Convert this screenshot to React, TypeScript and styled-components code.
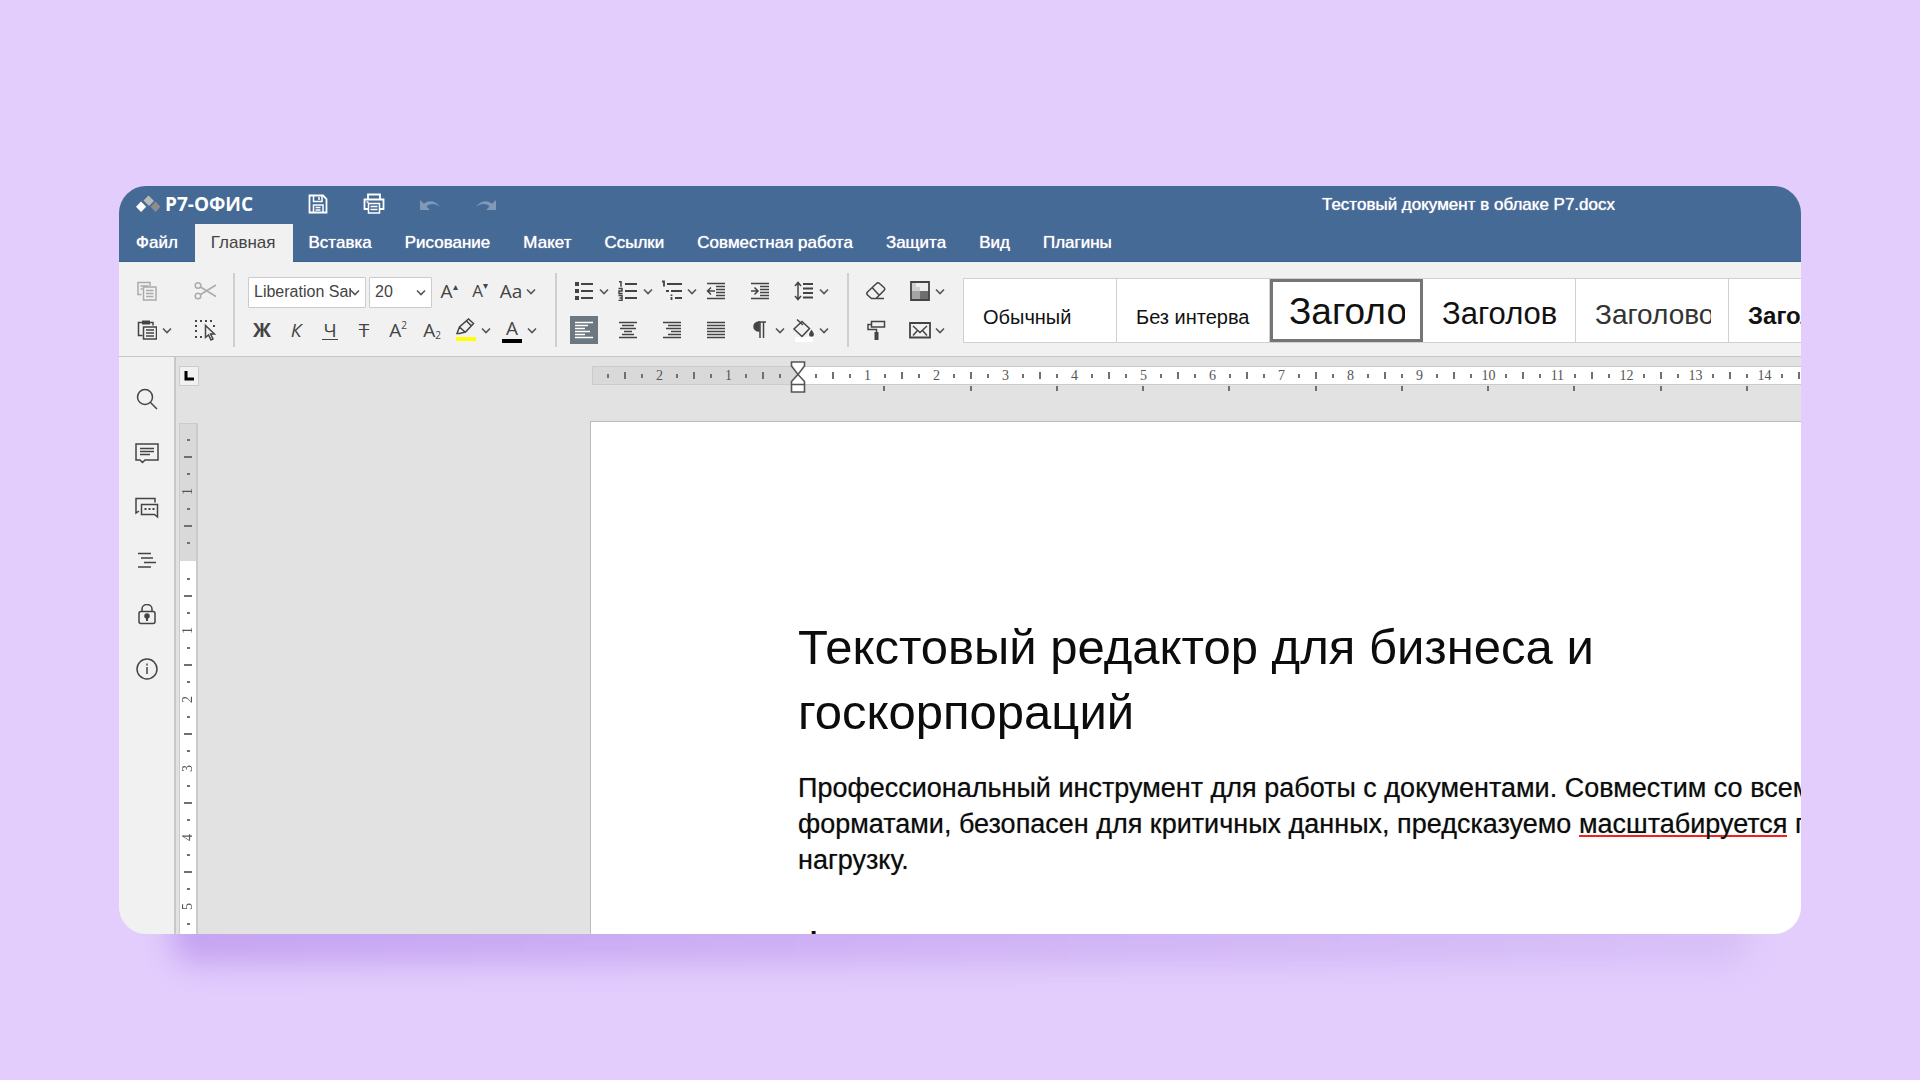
import React from "react";
import styled, { createGlobalStyle, css } from "styled-components";

const sans = '"Liberation Sans", Arial, sans-serif';
const ink = "#444444";

const GlobalStyle = createGlobalStyle`
  *, *::before, *::after { box-sizing: border-box; }
  body { margin: 0; background: #e2cdfd; font-family: ${sans}; }
  button, select { font: inherit; color: inherit; }
  h1, h2, p { margin: 0; font-weight: 400; }
  svg { display: block; flex: none; }
`;

/* ---------- frame ---------- */

const Stage = styled.main`
  height: 100vh;
  padding: 186px 119px 146px;
  display: flex;
  background: #e2cdfd;
  overflow: hidden;
`;

const Frame = styled.div`
  position: relative;
  z-index: 0;
  flex: 1;
  min-width: 0;
  display: flex;
  &::before {
    content: "";
    position: absolute;
    z-index: -1;
    left: 52px;
    right: 52px;
    bottom: -30px;
    height: 80px;
    border-radius: 24px;
    background: linear-gradient(90deg, #c5a3f1, #d8c0f7);
    filter: blur(14px);
  }
`;

const Editor = styled.div`
  flex: 1;
  min-width: 0;
  display: flex;
  flex-direction: column;
  border-radius: 27px;
  overflow: hidden;
  background: #e2e2e2;
`;

/* ---------- header ---------- */

const Header = styled.header`
  flex: none;
  background: #466a96;
  border-bottom: 1px solid #38608f;
  color: #ffffff;
`;

const TitleBar = styled.div`
  height: 38px;
  padding: 0 186px 0 17px;
  display: flex;
  align-items: center;
  justify-content: space-between;
`;

const TitleLeft = styled.div`
  display: flex;
  align-items: center;
  padding-bottom: 2px;
`;

const Brand = styled.a`
  width: 168px;
  display: flex;
  align-items: center;
  gap: 4px;
  color: inherit;
  text-decoration: none;
  font: 700 19px/28px "Open Sans", "Noto Sans", sans-serif;
`;

const QuickActions = styled.div`
  display: flex;
  gap: 28px;
`;

const QuickButton = styled.button`
  width: 28px;
  height: 28px;
  padding: 0;
  border: 0;
  background: none;
  display: grid;
  place-items: center;
  &:disabled { color: #8099b8; }
`;

const FileName = styled.span`
  font-size: 17px;
  line-height: 24px;
  text-shadow: 0 0 1px #ffffff;
`;

const Tabs = styled.nav`
  display: flex;
  height: 37px;
  padding-left: 1px;
`;

const Tab = styled.button<{ $active?: boolean }>`
  padding: 0 17px 0 16px;
  border: 0;
  background: none;
  font-size: 17px;
  line-height: 24px;
  text-shadow: 0 0 1px currentColor;
  white-space: nowrap;
  ${(p) =>
    p.$active &&
    css`
      background: #f1f1f1;
      color: ${ink};
      text-shadow: none;
      height: 38px;
    `}
`;

/* ---------- toolbar ---------- */

const Toolbar = styled.div`
  flex: none;
  height: 95px;
  padding: 14px 0 11px 14px;
  display: flex;
  background: #f1f1f1;
  border-bottom: 1px solid #c6c6c6;
  color: ${ink};
  overflow: hidden;
`;

const Group = styled.div<{ $min: number }>`
  flex: none;
  min-width: ${(p) => p.$min}px;
  display: flex;
  flex-direction: column;
  gap: 9px;
`;

const Row = styled.div<{ $gap?: number }>`
  height: 30px;
  display: flex;
  align-items: center;
  gap: ${(p) => p.$gap ?? 0}px;
`;

const CellGrid = styled.div<{ $cell: number; $count: number }>`
  flex: none;
  display: grid;
  grid-template-columns: repeat(${(p) => p.$count}, ${(p) => p.$cell}px);
  grid-auto-rows: 30px;
  row-gap: 9px;
  align-items: center;
`;

const Separator = styled.div`
  flex: none;
  width: 2px;
  height: 74px;
  margin: -3px 13px 0;
  background: #cfcfcf;
`;

const ToolButton = styled.button<{ $split?: boolean; $active?: boolean }>`
  flex: none;
  width: ${(p) => (p.$split ? 40 : 28)}px;
  height: 28px;
  padding: 0;
  border: 0;
  background: ${(p) => (p.$active ? "#6d7780" : "none")};
  color: ${(p) => (p.$active ? "#ffffff" : "inherit")};
  display: grid;
  grid-template-columns: 28px 12px;
  align-items: center;
  justify-items: center;
  &:disabled { color: #ababab; }
`;

const Glyph = styled.span<{ $bold?: boolean; $italic?: boolean; $size?: number; $bar?: string }>`
  display: block;
  font-family: "Open Sans", "Noto Sans", sans-serif;
  font-size: ${(p) => p.$size ?? 19}px;
  line-height: 20px;
  font-weight: ${(p) => (p.$bold ? 700 : 400)};
  font-style: ${(p) => (p.$italic ? "italic" : "normal")};
  white-space: nowrap;
  sup, sub { font-size: 10px; line-height: 0; }
  sup { vertical-align: 8px; }
  sub { vertical-align: -2px; }
  ${(p) =>
    p.$bar &&
    css`
      width: 20px;
      text-align: center;
      border-bottom: 4px solid ${p.$bar};
      padding-bottom: 1px;
    `}
`;

const Underlined = styled(Glyph)`
  border-bottom: 1px solid currentColor;
  line-height: 18px;
  padding: 0 1px;
`;

const Combo = styled.label<{ $width: number }>`
  position: relative;
  flex: none;
  width: ${(p) => p.$width}px;
  margin-top: 2px;
  svg {
    position: absolute;
    right: 6px;
    top: 12px;
    pointer-events: none;
  }
`;

const Select = styled.select`
  appearance: none;
  width: 100%;
  height: 31px;
  padding: 0 14px 0 5px;
  border: 1px solid #cbcbcb;
  border-radius: 1px;
  background: #ffffff;
  font: 16px/20px ${sans};
  display: block;
`;

const Gallery = styled.div`
  flex: none;
  display: flex;
  height: 65px;
  margin: 2px 0 0 13px;
  border: solid #d0d0d0;
  border-width: 1px 0 1px 1px;
  background: #ffffff;
`;

const StyleCard = styled.button<{ $size: number; $bold?: boolean; $selected?: boolean; $soft?: boolean }>`
  width: 153px;
  padding: 0 17px 0 19px;
  border: 0;
  border-right: 1px solid #d0d0d0;
  background: none;
  color: ${(p) => (p.$soft ? "#333333" : "#111111")};
  font-family: ${sans};
  font-size: ${(p) => p.$size}px;
  font-weight: ${(p) => (p.$bold ? 700 : 400)};
  text-align: left;
  display: flex;
  align-items: baseline;
  outline: ${(p) => (p.$selected ? "3px solid #757575" : "none")};
  outline-offset: -3px;
  &::before {
    content: "";
    height: 45px;
  }
`;

const StyleName = styled.span`
  flex: 1;
  min-width: 0;
  white-space: nowrap;
  overflow: clip;
`;

/* ---------- workspace ---------- */

const Workspace = styled.div`
  flex: 1;
  min-height: 0;
  display: flex;
`;

const Sidebar = styled.aside`
  flex: none;
  width: 57px;
  padding-top: 28px;
  display: flex;
  flex-direction: column;
  align-items: center;
  gap: 26px;
  background: #f1f1f1;
  border-right: 2px solid #c8c8c8;
  color: ${ink};
`;

const SideButton = styled.button`
  width: 28px;
  height: 28px;
  padding: 0;
  border: 0;
  background: none;
  display: grid;
  place-items: center;
`;

const Canvas = styled.div`
  flex: 1;
  min-width: 0;
  display: flex;
  flex-direction: column;
`;

const CanvasTop = styled.div`
  flex: none;
  height: 64px;
  padding: 9px 0 0 3px;
  display: flex;
  align-items: flex-start;
`;

const TabStop = styled.button`
  flex: none;
  width: 20px;
  height: 20px;
  padding: 0;
  border: 1px solid #cbcbcb;
  background: #f1f1f1;
  display: grid;
  place-items: center;
`;

const HRuler = styled.div`
  flex: 1;
  min-width: 0;
  margin-left: 393px;
`;

const HBar = styled.div`
  display: flex;
  height: 19px;
  border: solid #cbcbcb;
  border-width: 1px 0 1px 1px;
`;

const HMargin = styled.div`
  flex: none;
  width: 205px;
  padding-left: 6px;
  display: flex;
  background: #d9d9d9;
  overflow: hidden;
`;

const HText = styled.div`
  position: relative;
  flex: 1;
  min-width: 0;
  background: #ffffff;
`;

const HScale = styled.div`
  height: 100%;
  padding-left: 9px;
  display: flex;
  overflow: hidden;
`;

const HMarks = styled.div`
  flex: none;
  width: 69px;
  display: grid;
  grid-template-columns: repeat(4, 1fr);
  place-items: center;
`;

const TickLine = styled.i<{ $length: number; $vertical?: boolean }>`
  display: block;
  background: #707070;
  width: ${(p) => (p.$vertical ? p.$length : 2)}px;
  height: ${(p) => (p.$vertical ? 2 : p.$length)}px;
`;

const RulerNumber = styled.span<{ $vertical?: boolean }>`
  font: 14px/16px "Liberation Serif", serif;
  color: #555555;
  ${(p) =>
    p.$vertical &&
    css`
      writing-mode: vertical-rl;
      transform: rotate(180deg);
    `}
`;

const IndentMarker = styled.svg`
  position: absolute;
  left: -8px;
  top: -6px;
`;

const DefaultTabs = styled.div`
  display: flex;
  margin-left: 207px;
  padding-top: 1px;
  overflow: hidden;
`;

const DefaultTabGroup = styled.div`
  flex: none;
  width: 345px;
  display: grid;
  grid-template-columns: repeat(4, 1fr);
  justify-items: end;
`;

const CanvasBody = styled.div`
  flex: 1;
  min-height: 0;
  display: flex;
`;

const VRuler = styled.div`
  flex: none;
  width: 19px;
  margin: 2px 0 0 3px;
  border: solid #cbcbcb;
  border-width: 1px 2px 0 1px;
  overflow: hidden;
`;

const VPart = styled.div<{ $shade: string; $height?: number; $pad: number }>`
  height: ${(p) => (p.$height ? `${p.$height}px` : "auto")};
  padding-top: ${(p) => p.$pad}px;
  background: ${(p) => p.$shade};
  overflow: hidden;
`;

const VMarks = styled.div`
  height: 69px;
  display: grid;
  grid-template-rows: repeat(4, 1fr);
  place-items: center;
  > * { min-height: 0; }
`;

const Page = styled.article`
  flex: none;
  width: 1450px;
  margin-left: 392px;
  padding: 193px 104px 0 207px;
  background: #ffffff;
  border: solid #b9bac3;
  border-width: 1px 1px 0;
  color: #0c0c0c;
  white-space: nowrap;
  overflow: hidden;
`;

const Heading = styled.h1`
  font-size: 49px;
  line-height: 65px;
`;

const Paragraph = styled.p`
  margin-top: 25px;
  font-size: 27px;
  line-height: 36px;
  text-shadow: 0 0 1px #8a8a8a;
`;

const Misspelled = styled.span`
  display: inline-block;
  height: 31px;
  border-bottom: 2px solid #f3211b;
  vertical-align: top;
`;

const SubHeading = styled.h2`
  margin-top: 44px;
  font-size: 41px;
  line-height: 46px;
`;

/* ---------- icons ---------- */

type IconProps = { size?: number; children: React.ReactNode };
const Icon = ({ size = 20, children }: IconProps) => (
  <svg
    width={size}
    height={size}
    viewBox={`0 0 ${size} ${size}`}
    fill="none"
    stroke="currentColor"
    strokeWidth="1.5"
    aria-hidden="true"
  >
    {children}
  </svg>
);

const Chevron = () => (
  <svg width="10" height="7" viewBox="0 0 10 7" fill="none" stroke="#555555" strokeWidth="1.6" aria-hidden="true">
    <path d="M1 1.500l4 4 4-4" />
  </svg>
);

const lines = (rows: [number, number, number][]) => rows.map(([x, y, w]) => `M${x} ${y}h${w}`).join("");

const Logo = () => (
  <svg width="25" height="18" viewBox="0 0 25 18" aria-hidden="true">
    <path d="M12.500 0.500l5.500 5.500-5 5-5.500-5.500z" fill="#b9b9b9" />
    <path d="M5 6.500l5.200 5.200-5.200 5.200-5-5.200z" fill="#ffffff" />
    <path d="M19.500 6.500l4.900 5.200-4.900 5.200-4.900-5.200z" fill="#8f8d8c" />
  </svg>
);

const SaveIcon = () => (
  <Icon>
    <path d="M1.500 1.500h13.500l3.500 3.500v13.500h-17z" strokeWidth="1.800" />
    <path d="M5.500 2v5.500h8.500v-5.500M11 3v3M5.500 18v-7h9.500v7M7.500 13.500h5M7.500 16h5" />
  </Icon>
);

const PrintIcon = () => (
  <Icon size={24}>
    <path d="M6 7v-4.500h12v4.500M6 17h-3.500v-9.500h19v9.500h-3.500" strokeWidth="1.800" />
    <path d="M6.500 11.500h11v9.500h-11zM8.500 14.500h7M8.500 17.500h7M4.500 10h2" />
  </Icon>
);

const UndoIcon = ({ flip }: { flip?: boolean }) => (
  <Icon size={22}>
    <g transform={flip ? "matrix(-1 0 0 1 22 0)" : undefined} stroke="none" fill="currentColor">
      <path d="M1 7v10h10l-3.500-3.500c4-3.500 9-3 13.500.5-4-6.500-11.500-7.500-16-3.300z" />
    </g>
  </Icon>
);

const CopyIcon = () => (
  <Icon>
    <path d="M4.500 13.500h-3.500v-12h12v3.500M3.500 5h8M3.500 8h2M6.500 6h12.500v13h-12.500zM9 9.500h7.500M9 12.500h7.500M9 15.500h7.500" />
  </Icon>
);

const CutIcon = () => (
  <Icon size={22}>
    <circle cx="4" cy="5.500" r="2.800" />
    <circle cx="4" cy="16" r="2.800" />
    <path d="M6.500 7l15.500 9.500M6.500 14.500l15.500-9.500" />
  </Icon>
);

const PasteIcon = () => (
  <Icon>
    <path d="M5 2.500h-3.500v13h4M13 2.500h3v3" />
    <path d="M5 0.500h8v4h-8z" fill="currentColor" stroke="none" />
    <path d="M6.500 7h13v12h-13zM9 10h8M9 13h8M9 16h8" />
  </Icon>
);

const SelectAllIcon = () => (
  <Icon size={22}>
    <path d="M1 2h20M1 18h9" strokeDasharray="2 3" strokeWidth="2" />
    <path d="M2 6v10M20 6v4" strokeDasharray="2 3" strokeWidth="2" />
    <path d="M11.500 6.500v12l3-2.500 2.500 5 2-1-2.500-5h4z" fill="#f1f1f1" />
  </Icon>
);

const HighlightIcon = () => (
  <Icon size={24}>
    <path d="M3 15.500l2.500-6.500 9-8 5 4.500-8 8.500-6 1.500zM5.500 9l5.500 5M12.500 3l4.500 4.500" />
    <path d="M2 19h20v4h-20z" fill="#ffff00" stroke="none" />
  </Icon>
);

const BulletsIcon = () => (
  <Icon>
    <path d={lines([[7, 3, 12], [7, 10, 12], [7, 17, 12]])} strokeWidth="1.800" />
    <path d="M1 1h4v4h-4zM1 8h4v4h-4zM1 15h4v4h-4z" fill="currentColor" stroke="none" />
  </Icon>
);

const NumbersIcon = () => (
  <Icon>
    <path d={lines([[7, 3, 12], [7, 10, 12], [7, 17, 12]])} strokeWidth="1.800" />
    <path d="M1 0.700h2v5M0.500 7.500h3.500v2.500h-3v2.500h3.500M0.500 14.500h3.500v5h-3.500M1.500 17h2.500" strokeWidth="1.500" />
  </Icon>
);

const MultiLevelIcon = () => (
  <Icon size={22}>
    <path d={lines([[6, 4, 15], [10, 11, 11], [14, 18, 7]])} strokeWidth="1.800" />
    <path d="M1 1.500h2v5M5 11h3M10.500 14.500v1.500M10.500 17v3" strokeWidth="1.800" />
  </Icon>
);

const OutdentIcon = ({ flip }: { flip?: boolean }) => (
  <Icon>
    <path
      d={lines([[1, 2.500, 18], [10, 5.500, 9], [10, 8.500, 9], [10, 11.500, 9], [10, 14.500, 9], [1, 17.500, 18]])}
      strokeWidth="1.500"
    />
    <path d={flip ? "M1 10h7M4.500 6.500l3.500 3.500-3.500 3.500" : "M2 10h7M5 6.500l-3.500 3.500 3.500 3.500"} />
  </Icon>
);

const LineSpacingIcon = () => (
  <Icon>
    <path d={lines([[9, 3, 10], [9, 7.500, 10], [9, 12, 10], [9, 16.500, 10]])} strokeWidth="1.800" />
    <path d="M4 2v16M1 5l3-3.500 3 3.500M1 15l3 3.500 3-3.500" />
  </Icon>
);

const alignRows: Record<string, [number, number, number][]> = {
  left: [[1, 2.500, 18], [1, 5.500, 13], [1, 8.500, 10], [1, 11.500, 15], [1, 14.500, 10], [1, 17.500, 18]],
  center: [[1, 2.500, 18], [4, 5.500, 12], [2, 8.500, 16], [6, 11.500, 8], [4, 14.500, 12], [1, 17.500, 18]],
  right: [[1, 2.500, 18], [6, 5.500, 13], [4, 8.500, 15], [9, 11.500, 10], [6, 14.500, 13], [1, 17.500, 18]],
  justify: [[1, 2.500, 18], [1, 5.500, 18], [1, 8.500, 18], [1, 11.500, 18], [1, 14.500, 18], [1, 17.500, 18]],
};

const AlignIcon = ({ kind }: { kind: string }) => (
  <Icon>
    <path d={lines(alignRows[kind])} strokeWidth="1.600" />
  </Icon>
);

const PilcrowIcon = () => (
  <Icon>
    <path d="M9 2a5 4.500 0 0 0 0 9z" fill="currentColor" />
    <path d="M8 2h8M10 2v16M13.500 2v16" />
  </Icon>
);

const FillIcon = () => (
  <Icon size={24}>
    <path d="M3 19h18v5h-18z" fill="#ffffff" stroke="none" />
    <path d="M10 3.500l7.500 7-7.500 8-8-7.500zM5 1.500l6 5.500" />
    <path d="M19.500 13c2.500 3.500 2 5 0 5s-2.500-1.500 0-5z" fill="currentColor" />
  </Icon>
);

const EraserIcon = () => (
  <Icon size={22}>
    <path d="M2.500 12l9-8.500q1.500-1.500 3 0l4.500 4q1.500 1.500 0 3l-8 8h-4.500l-4-3.500q-1.500-1.500 0-3zM7.500 8l6.500 7M10 18.500h9" />
  </Icon>
);

const PainterIcon = () => (
  <Icon>
    <path d="M5.500 1.500h13v5.500h-13zM5.500 4.500h-3.500v5h8.500v2.500" />
    <path d="M8.500 12h4v8h-4z" fill="currentColor" stroke="none" />
  </Icon>
);

const PaletteIcon = () => (
  <Icon>
    <path d="M1 1h9v9h-9z" fill="#cfcfcf" stroke="none" />
    <path d="M6 1h5v5h-5zM11 1h8v9h-8z" fill="#ececec" stroke="none" />
    <path d="M1 10h9v9h-9z" fill="#a4a4a4" stroke="none" />
    <path d="M10 10h9v9h-9z" fill="#6f6f6f" stroke="none" />
    <path d="M1 1h18v18h-18z" strokeWidth="1.800" />
  </Icon>
);

const MailIcon = () => (
  <Icon size={22}>
    <path d="M1 4h20v14.500h-20z" strokeWidth="1.800" />
    <path d="M4 7l7 6.500 7-6.500M4 16.500l4.500-5M18 16.500l-4.500-5" />
  </Icon>
);

const SearchIcon = () => (
  <Icon size={22}>
    <circle cx="9" cy="9" r="7.500" />
    <path d="M14.500 14.500l6.500 6.500" />
  </Icon>
);

const CommentIcon = () => (
  <Icon size={24}>
    <path d="M1 3h22v16h-13l-2.500 2.500-2.500-2.500h-4zM5 7.500h14M5 10.500h14M5 13.500h10" />
  </Icon>
);

const ChatIcon = () => (
  <Icon size={24}>
    <path d="M4 16l-3 2v-14.500h19v4M6.500 9.500h16v12.500l-3-2.500h-13z" />
    <path d="M9.500 14h2M13.500 14h2M17.500 14h2" strokeWidth="2" />
  </Icon>
);

const NavIcon = () => (
  <Icon>
    <path d={lines([[1, 2.500, 13], [4, 7, 12], [7, 11.500, 12], [1, 16, 13]])} />
  </Icon>
);

const LockIcon = () => (
  <Icon size={22}>
    <rect x="3" y="7.500" width="16" height="12" rx="2" />
    <path d="M6 7v-2a5 4.500 0 0 1 10 0v2" />
    <circle cx="11" cy="12" r="2" fill="currentColor" />
    <path d="M11 12v5" strokeWidth="2" />
  </Icon>
);

const InfoIcon = () => (
  <Icon size={22}>
    <circle cx="11" cy="11" r="10" />
    <path d="M11 9v7M11 5.500v2" />
  </Icon>
);

/* ---------- data ---------- */

const tabNames = ["Файл", "Главная", "Вставка", "Рисование", "Макет", "Ссылки", "Совместная работа", "Защита", "Вид", "Плагины"];

const sideTools: [string, React.ReactNode][] = [
  ["Поиск", <SearchIcon />],
  ["Комментарии", <CommentIcon />],
  ["Чат", <ChatIcon />],
  ["Навигация", <NavIcon />],
  ["Защита", <LockIcon />],
  ["О программе", <InfoIcon />],
];

const paragraphTools: { label: string; icon: React.ReactNode; split?: boolean; active?: boolean }[] = [
  { label: "Маркеры", icon: <BulletsIcon />, split: true },
  { label: "Нумерация", icon: <NumbersIcon />, split: true },
  { label: "Многоуровневый список", icon: <MultiLevelIcon />, split: true },
  { label: "Уменьшить отступ", icon: <OutdentIcon /> },
  { label: "Увеличить отступ", icon: <OutdentIcon flip /> },
  { label: "Междустрочный интервал", icon: <LineSpacingIcon />, split: true },
  { label: "По левому краю", icon: <AlignIcon kind="left" />, active: true },
  { label: "По центру", icon: <AlignIcon kind="center" /> },
  { label: "По правому краю", icon: <AlignIcon kind="right" /> },
  { label: "По ширине", icon: <AlignIcon kind="justify" /> },
  { label: "Непечатаемые символы", icon: <PilcrowIcon />, split: true },
  { label: "Заливка", icon: <FillIcon />, split: true },
];

const cardStyles: { name: string; size: number; bold?: boolean; selected?: boolean; soft?: boolean }[] = [
  { name: "Обычный", size: 20 },
  { name: "Без интерва", size: 20 },
  { name: "Заголо", size: 37, selected: true },
  { name: "Заголов", size: 31 },
  { name: "Заголово", size: 28, soft: true },
  { name: "Заголо", size: 24, bold: true },
];

/* ---------- parts ---------- */

type ToolProps = { label: string; split?: boolean; active?: boolean; disabled?: boolean; children: React.ReactNode };
const Tool = ({ label, split, active, disabled, children }: ToolProps) => (
  <ToolButton type="button" aria-label={label} disabled={disabled} $split={split} $active={active}>
    {children}
    {split && <Chevron />}
  </ToolButton>
);

const Marks = ({ value, vertical }: { value?: number; vertical?: boolean }) => {
  const Box = vertical ? VMarks : HMarks;
  return (
    <Box>
      <TickLine $length={vertical ? 3 : 4} $vertical={vertical} />
      <TickLine $length={vertical ? 8 : 7} $vertical={vertical} />
      <TickLine $length={vertical ? 3 : 4} $vertical={vertical} />
      {value ? <RulerNumber $vertical={vertical}>{value}</RulerNumber> : <span />}
    </Box>
  );
};

const range = (n: number) => Array.from({ length: n }, (_, i) => i + 1);

export default function App() {
  return (
    <Stage>
      <GlobalStyle />
      <Frame>
        <Editor>
          <Header>
            <TitleBar>
              <TitleLeft>
                <Brand href="#">
                  <Logo />
                  Р7-ОФИС
                </Brand>
                <QuickActions>
                  <QuickButton type="button" aria-label="Сохранить"><SaveIcon /></QuickButton>
                  <QuickButton type="button" aria-label="Печать"><PrintIcon /></QuickButton>
                  <QuickButton type="button" aria-label="Отменить" disabled><UndoIcon /></QuickButton>
                  <QuickButton type="button" aria-label="Повторить" disabled><UndoIcon flip /></QuickButton>
                </QuickActions>
              </TitleLeft>
              <FileName>Тестовый документ в облаке Р7.docx</FileName>
            </TitleBar>
            <Tabs>
              {tabNames.map((name) => (
                <Tab key={name} type="button" $active={name === "Главная"}>{name}</Tab>
              ))}
            </Tabs>
          </Header>

          <Toolbar>
            <Group $min={87}>
              <Row $gap={30}>
                <Tool label="Копировать" disabled><CopyIcon /></Tool>
                <Tool label="Вырезать" disabled><CutIcon /></Tool>
              </Row>
              <Row $gap={18}>
                <Tool label="Вставить" split><PasteIcon /></Tool>
                <Tool label="Выделить всё"><SelectAllIcon /></Tool>
              </Row>
            </Group>
            <Separator />
            <Group $min={294}>
              <Row $gap={3}>
                <Combo $width={118}>
                  <Select aria-label="Шрифт"><option>Liberation Sans</option></Select>
                  <Chevron />
                </Combo>
                <Combo $width={63}>
                  <Select aria-label="Размер шрифта"><option>20</option></Select>
                  <Chevron />
                </Combo>
                <Tool label="Увеличить размер"><Glyph>A<sup>▴</sup></Glyph></Tool>
                <Tool label="Уменьшить размер"><Glyph $size={17}>A<sup>▾</sup></Glyph></Tool>
                <Tool label="Регистр" split><Glyph>Aa</Glyph></Tool>
              </Row>
              <Row $gap={6}>
                <Tool label="Полужирный"><Glyph $bold>Ж</Glyph></Tool>
                <Tool label="Курсив"><Glyph $italic>К</Glyph></Tool>
                <Tool label="Подчёркнутый"><Underlined>Ч</Underlined></Tool>
                <Tool label="Зачёркнутый"><Glyph><s>Т</s></Glyph></Tool>
                <Tool label="Надстрочный"><Glyph>A<sup>2</sup></Glyph></Tool>
                <Tool label="Подстрочный"><Glyph>A<sub>2</sub></Glyph></Tool>
                <Tool label="Цвет выделения" split><HighlightIcon /></Tool>
                <Tool label="Цвет шрифта" split><Glyph $bar="#000000">A</Glyph></Tool>
              </Row>
            </Group>
            <Separator />
            <CellGrid $cell={44} $count={6}>
              {paragraphTools.map((t) => (
                <Tool key={t.label} label={t.label} split={t.split} active={t.active}>{t.icon}</Tool>
              ))}
            </CellGrid>
            <Separator />
            <CellGrid $cell={44} $count={2}>
              <Tool label="Очистить стиль"><EraserIcon /></Tool>
              <Tool label="Цветовая схема" split><PaletteIcon /></Tool>
              <Tool label="Копировать стиль"><PainterIcon /></Tool>
              <Tool label="Слияние" split><MailIcon /></Tool>
            </CellGrid>
            <Gallery>
              {cardStyles.map((c) => (
                <StyleCard key={c.size + c.name} type="button" $size={c.size} $bold={c.bold} $selected={c.selected} $soft={c.soft}>
                  <StyleName>{c.name}</StyleName>
                </StyleCard>
              ))}
            </Gallery>
          </Toolbar>

          <Workspace>
            <Sidebar>
              {sideTools.map(([label, icon]) => (
                <SideButton key={label} type="button" aria-label={label}>{icon}</SideButton>
              ))}
            </Sidebar>
            <Canvas>
              <CanvasTop>
                <TabStop type="button" aria-label="Табуляция">
                  <svg width="10" height="10" viewBox="0 0 10 10" fill="none" stroke="#000000" strokeWidth="3">
                    <path d="M2 0v8h8" />
                  </svg>
                </TabStop>
                <HRuler>
                  <HBar>
                    <HMargin>
                      <Marks value={2} />
                      <Marks value={1} />
                      <Marks />
                    </HMargin>
                    <HText>
                      <HScale>
                        {range(18).map((n) => <Marks key={n} value={n} />)}
                      </HScale>
                      <IndentMarker width="16" height="32" viewBox="0 0 16 32" fill="#ffffff" stroke="#555555" strokeWidth="1.6">
                        <path d="M1.500 1h13v4l-6.500 8.500-6.500-8.500z" />
                        <path d="M8 13.500l6.500 7v10.500h-13v-10.500zM1.500 23.500h13" />
                      </IndentMarker>
                    </HText>
                  </HBar>
                  <DefaultTabs>
                    {range(4).map((n) => (
                      <DefaultTabGroup key={n}>
                        {range(4).map((k) => <TickLine key={k} $length={5} />)}
                      </DefaultTabGroup>
                    ))}
                  </DefaultTabs>
                </HRuler>
              </CanvasTop>
              <CanvasBody>
                <VRuler>
                  <VPart $shade="#d9d9d9" $height={137} $pad={7}>
                    <Marks value={1} vertical />
                    <Marks vertical />
                  </VPart>
                  <VPart $shade="#ffffff" $pad={9}>
                    {range(9).map((n) => <Marks key={n} value={n} vertical />)}
                  </VPart>
                </VRuler>
                <Page>
                  <Heading>
                    Текстовый редактор для бизнеса и<br />госкорпораций
                  </Heading>
                  <Paragraph>
                    Профессиональный инструмент для работы с документами. Совместим со всеми<br />
                    форматами, безопасен для критичных данных, предсказуемо <Misspelled>масштабируется</Misspelled> под<br />
                    нагрузку.
                  </Paragraph>
                  <SubHeading>Ф</SubHeading>
                </Page>
              </CanvasBody>
            </Canvas>
          </Workspace>
        </Editor>
      </Frame>
    </Stage>
  );
}
